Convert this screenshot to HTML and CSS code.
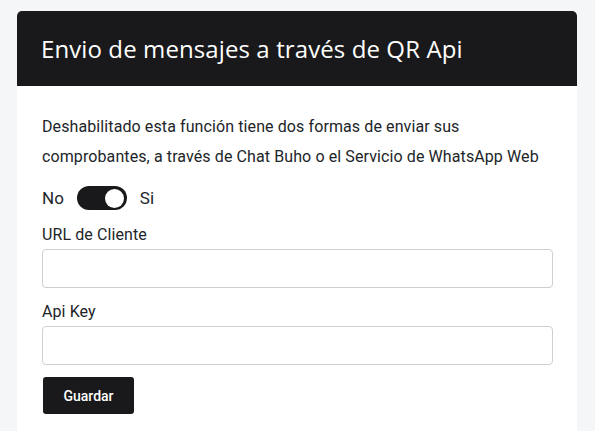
FILE: index.html
```html
<!DOCTYPE html>
<html lang="es">
<head>
<meta charset="utf-8">
<link rel="stylesheet" href="styles.css">
</head>
<body>
<div class="page">
  <div class="card">
    <div class="card-header">
      <h1 class="title">Envio de mensajes a través de QR Api</h1>
    </div>
    <div class="card-body">
      <p class="desc">Deshabilitado esta función tiene dos formas de enviar sus<br>comprobantes, a través de Chat Buho o el Servicio de WhatsApp Web</p>
      <div class="toggle-row">
        <span class="toggle-label">No</span>
        <span class="switch"><span class="knob"></span></span>
        <span class="toggle-label">Si</span>
      </div>
      <label class="field-label">URL de Cliente</label>
      <input class="field-input" type="text">
      <label class="field-label second">Api Key</label>
      <input class="field-input" type="text">
      <button class="btn">Guardar</button>
    </div>
  </div>
</div>
</body>
</html>
```
FILE: styles.css
```css
* { box-sizing: border-box; }
html, body { margin: 0; padding: 0; }
body {
  background: #f5f6f8;
  font-family: Roboto, "Liberation Sans", sans-serif;
  color: #212529;
  width: 595px;
  height: 431px;
  overflow: hidden;
}
.page {
  padding: 11px 18px 0 17px;
}
.card {
  background: #fff;
  border-radius: 5px 5px 0 0;
  overflow: hidden;
  height: 420px;
}
.card-header {
  background: #19191b;
  height: 75px;
  display: flex;
  align-items: center;
  padding: 0 24px;
}
.title {
  margin: 0;
  font-family: "Open Sans", sans-serif;
  font-weight: 400;
  font-size: 24px;
  color: #fff;
  letter-spacing: 0.1px;
}
.card-body {
  padding: 26px 24px 0 25px;
  display: flex;
  flex-direction: column;
}
.desc {
  margin: 0;
  font-size: 16px;
  line-height: 30px;
  letter-spacing: 0.1px;
  color: #212529;
  white-space: nowrap;
}
.toggle-row {
  display: flex;
  align-items: center;
  gap: 13px;
  margin-top: 14px;
  height: 24px;
}
.toggle-label {
  font-size: 17px;
  color: #212529;
}
.switch {
  width: 50px;
  height: 24px;
  background: #19191b;
  border-radius: 12px;
  display: flex;
  align-items: center;
  justify-content: flex-end;
  padding-right: 3px;
}
.knob {
  width: 19px;
  height: 19px;
  background: #fff;
  border-radius: 50%;
}
.field-label {
  font-size: 16px;
  line-height: 20px;
  margin-top: 15px;
  margin-bottom: 4px;
  letter-spacing: 0.1px;
}
.field-label.second {
  margin-top: 14px;
}
.field-input {
  width: 511px;
  height: 39px;
  border: 1px solid #cfcfcf;
  border-radius: 4px;
  background: #fff;
  margin: 0;
}
.btn {
  margin-top: 12px;
  margin-left: 1px;
  width: 91px;
  height: 37px;
  background: #19191b;
  color: #fff;
  border: none;
  border-radius: 3px;
  font-family: Roboto, sans-serif;
  font-weight: 500;
  font-size: 14px;
  padding: 0;
}
```
